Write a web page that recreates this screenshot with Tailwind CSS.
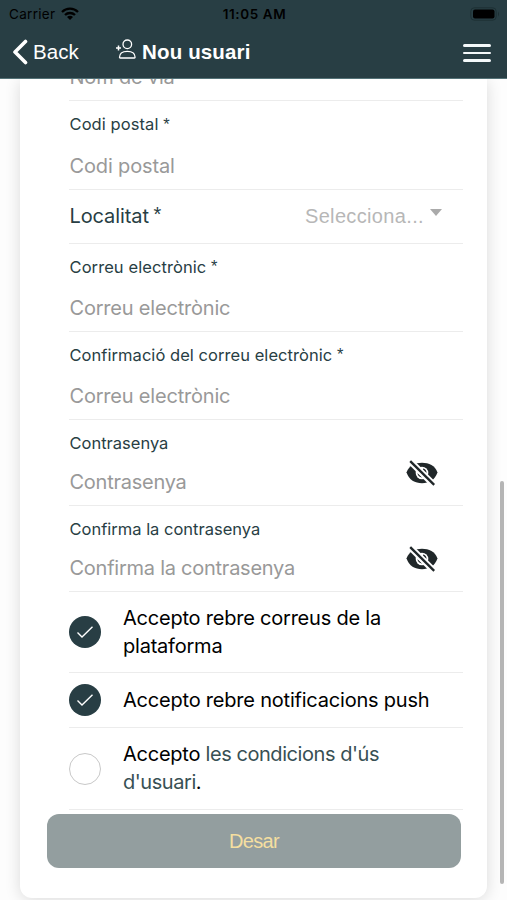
<!DOCTYPE html>
<html lang="ca">
<head>
<meta charset="utf-8">
<meta name="viewport" content="width=device-width, initial-scale=1">
<title>Nou usuari</title>
<script src="https://cdn.jsdelivr.net/npm/@tailwindcss/browser@4"></script>
</head>
<body class="relative flex h-[900px] w-[507px] flex-col overflow-hidden bg-[#fdfdfd] font-['Inter','Liberation_Sans',sans-serif] text-[#283e44]">
<header class="h-[79px] shrink-0 border-b border-[#547277] bg-[#283e44]">
  <div class="grid h-7 grid-cols-3 items-center pr-[7px] pl-[9px] text-black">
    <div class="flex items-center gap-[6px]">
      <span class="text-[13.5px] tracking-[0.3px]">Carrier</span>
      <svg class="-mt-0.5 h-[13px] w-[18px]" viewBox="0 0 18 13" fill="none" stroke="currentColor" stroke-width="2.3"><path d="M1 5C5.5.6 12.5.6 17 5M4 8c2.8-2.7 7.2-2.7 10 0"/><path d="M6 9.900c1.700-1.600 4.300-1.600 6 0l-3 3z" fill="currentColor" stroke="none"/></svg>
    </div>
    <span class="text-center text-[13.5px] font-semibold tracking-[0.6px] whitespace-nowrap">11:05 AM</span>
    <svg class="-mt-px h-[14px] w-[30px] justify-self-end" viewBox="0 0 30 14"><rect x=".8" y=".8" width="25.4" height="12.4" rx="3.5" fill="none" stroke="#1d3034"/><rect x="3" y="2.5" width="21.5" height="9" rx="2" fill="#000"/><path d="M28 4.5q2 2.5 0 5z" fill="#1d3034"/></svg>
  </div>
  <div class="flex h-12 items-center pr-4 pl-3 text-white">
    <svg class="h-[26px] w-4" viewBox="0 0 16 26" fill="none" stroke="currentColor" stroke-width="3.6" stroke-linecap="round" stroke-linejoin="round"><path d="M13.5 2.5 3 13l10.500 10.500"/></svg>
    <span class="ml-[5px] w-[83px] font-['Liberation_Sans'] text-[20.5px] tracking-[0.1px]">Back</span>
    <svg class="-mt-1.5 h-5 w-[21px]" viewBox="0 0 21 20" fill="none" stroke="currentColor" stroke-width="1.3"><circle cx="11.300" cy="5.300" r="4.300"/><path d="M3.500 18.300c0-4 3.400-6 7.800-6s7.800 2 7.800 6q0 .7-.7.7H4.200q-.7 0-.7-.7z"/><path d="M0 9h5M2.500 6.500v5" stroke-width="1.500"/></svg>
    <h1 class="ml-[5px] font-['Liberation_Sans'] text-[20.5px] font-bold tracking-[0.15px]">Nou usuari</h1>
    <div class="ml-auto flex w-[28px] flex-col gap-[5px] pt-[2px]"><i class="h-[2.5px] rounded-sm bg-[#f4f9fa]"></i><i class="h-[2.5px] rounded-sm bg-[#f4f9fa]"></i><i class="h-[2.5px] rounded-sm bg-[#f4f9fa]"></i></div>
  </div>
</header>
<main class="min-h-0 flex-1 overflow-hidden pr-5 pl-5">
  <form class="h-[819px] w-[467px] rounded-b-[12px] bg-white shadow-[0_2px_16px_rgba(0,0,0,0.14)]">
    <div class="ml-[49px] w-[394px] text-[20px] leading-6">
      <div class="h-[22px] overflow-hidden border-b border-[#ececec]"><p class="-mt-3.5 pl-[0.5px] tracking-[-0.2px] text-[#999]">Nom de via</p></div>
      <div class="h-[89px] border-b border-[#ececec] pt-[13px]">
        <label class="block h-5 pl-[0.5px] text-[16.5px] leading-5 tracking-[0.08px]">Codi postal <span class="font-['Liberation_Sans']">*</span></label>
        <p class="mt-5 pl-[0.5px] tracking-[-0.15px] text-[#999]">Codi postal</p>
      </div>
      <div class="flex h-[54px] items-center border-b border-[#ececec]">
        <label class="-mt-0.5 pl-[0.5px] tracking-[-0.1px]">Localitat <span class="relative -top-0.5 -ml-px font-['Liberation_Sans']">*</span></label>
        <span class="-mt-0.5 ml-auto font-['Liberation_Sans'] tracking-[0.35px] text-[#b7b7b7]">Selecciona...</span>
        <svg class="mt-[-8px] mr-[21px] ml-[6px] h-[7px] w-3" viewBox="0 0 12 7" fill="#aaa"><path d="M0 0h12L6 7z"/></svg>
      </div>
      <div class="h-[88px] border-b border-[#ececec] pt-[13px]">
        <label class="block h-5 pl-[0.5px] text-[16.5px] leading-5 tracking-[0.08px]">Correu electrònic <span class="relative -top-px font-['Liberation_Sans']">*</span></label>
        <p class="mt-[19px] pl-[0.5px] tracking-[-0.200px] text-[#999]">Correu electrònic</p>
      </div>
      <div class="h-[88px] border-b border-[#ececec] pt-[13px]">
        <label class="block h-5 pl-[0.5px] text-[16.5px] leading-5 tracking-[0.05px]">Confirmació del correu electrònic <span class="relative -top-px font-['Liberation_Sans']">*</span></label>
        <p class="mt-[19px] pl-[0.5px] tracking-[-0.200px] text-[#999]">Correu electrònic</p>
      </div>
      <div class="flex h-[86px] justify-between border-b border-[#ececec] pt-[13px]">
        <div>
          <label class="block h-5 pl-[0.5px] text-[16.5px] leading-5">Contrasenya</label>
          <p class="mt-[17px] pl-[0.5px] tracking-[-0.250px] text-[#999]">Contrasenya</p>
        </div>
        <svg class="mt-[27px] mr-[25px] h-[26px] w-8" viewBox="0 0 32 26"><path d="M.5 12.500C3 5.500 9 2.700 16 2.700S29 5.500 31.500 12.500C29 20 23 23.200 16 23.200S3 20 .5 12.500z" fill="#202729"/><circle cx="16" cy="13" r="6.300" fill="#fff"/><path d="M17 8.500a4.500 4.500 0 0 1 3.500 4.500l-2-1-1.500-1.500zM11.500 13a4.500 4.500 0 0 0 5 4.500l-2-2z" fill="#202729"/><path d="M3 0l25 25" stroke="#fff" stroke-width="6.500"/><path d="M4.200 1.200l24 23.600" stroke="#202729" stroke-width="2.400"/></svg>
      </div>
      <div class="flex h-[86px] justify-between border-b border-[#ececec] pt-[13px]">
        <div>
          <label class="block h-5 pl-[0.5px] text-[16.5px] leading-5">Confirma la contrasenya</label>
          <p class="mt-[17px] pl-[0.5px] tracking-[-0.250px] text-[#999]">Confirma la contrasenya</p>
        </div>
        <svg class="mt-[27px] mr-[25px] h-[26px] w-8" viewBox="0 0 32 26"><path d="M.5 12.500C3 5.500 9 2.700 16 2.700S29 5.500 31.500 12.500C29 20 23 23.200 16 23.200S3 20 .5 12.500z" fill="#202729"/><circle cx="16" cy="13" r="6.300" fill="#fff"/><path d="M17 8.500a4.500 4.500 0 0 1 3.500 4.500l-2-1-1.500-1.500zM11.500 13a4.500 4.500 0 0 0 5 4.500l-2-2z" fill="#202729"/><path d="M3 0l25 25" stroke="#fff" stroke-width="6.500"/><path d="M4.200 1.200l24 23.600" stroke="#202729" stroke-width="2.400"/></svg>
      </div>
      <div class="flex h-[81px] items-center gap-[22px] border-b border-[#ececec] text-black">
        <span class="flex size-8 shrink-0 items-center justify-center rounded-full bg-[#283e44]"><svg class="h-3 w-4" viewBox="0 0 16 12" fill="none" stroke="#fff" stroke-width="1.400"><path d="M.5 6.500 5 11 15.500.7"/></svg></span>
        <p class="leading-7 tracking-[-0.220px]">Accepto rebre correus de la<br>plataforma</p>
      </div>
      <div class="flex h-[55px] items-center gap-[22px] border-b border-[#ececec] text-black">
        <span class="flex size-8 shrink-0 items-center justify-center rounded-full bg-[#283e44]"><svg class="h-3 w-4" viewBox="0 0 16 12" fill="none" stroke="#fff" stroke-width="1.400"><path d="M.5 6.500 5 11 15.500.7"/></svg></span>
        <p class="tracking-[-0.210px] whitespace-nowrap">Accepto rebre notificacions push</p>
      </div>
      <div class="flex h-[82px] items-center gap-[22px] border-b border-[#ececec] text-black">
        <span class="size-8 shrink-0 rounded-full border border-[#c8c8c8]"></span>
        <p class="-mt-0.5 leading-7 tracking-[-0.250px]">Accepto <a class="tracking-[-0.440px] text-[#385054]">les condicions d'ús<br>d'usuari</a>.</p>
      </div>
    </div>
    <button type="button" class="mt-1 ml-[27px] block h-[54px] w-[414px] rounded-[12px] bg-[#939e9f] font-['Liberation_Sans'] text-[20px] tracking-[-0.7px] text-[#f5dfa0]">Desar</button>
  </form>
</main>
<div class="absolute top-[481px] right-[3px] h-[403px] w-1 rounded-full bg-[#b5b5b5]"></div>
</body>
</html>
